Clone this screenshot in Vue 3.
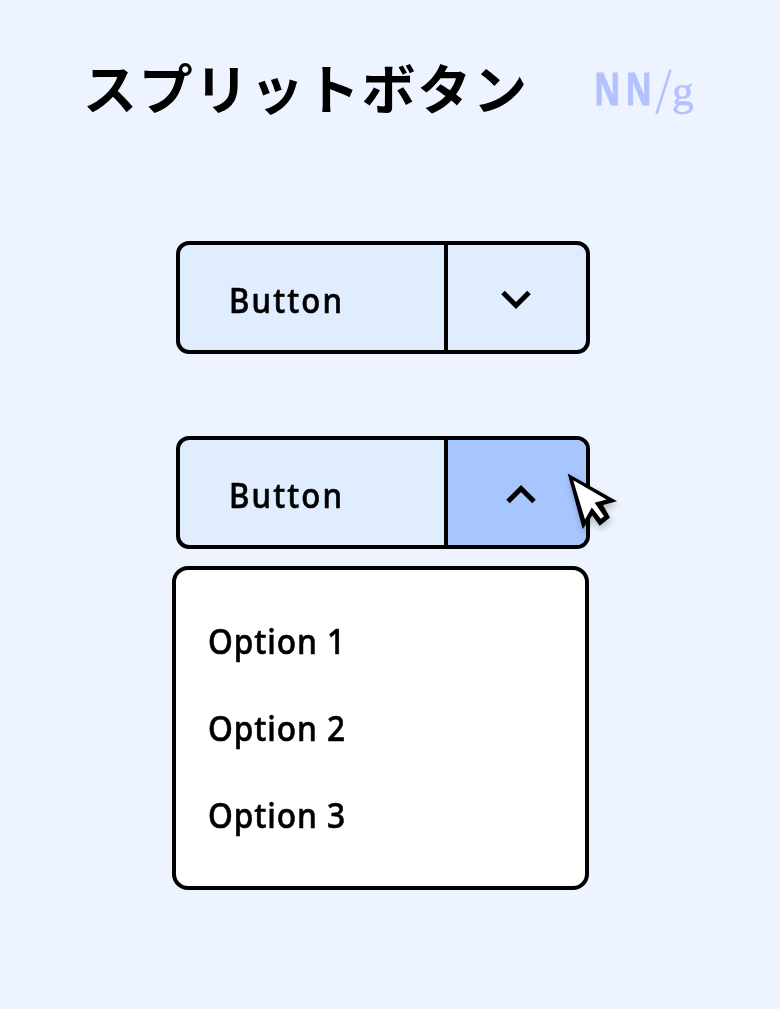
<script setup>
const options = ['Option 1', 'Option 2', 'Option 3']
</script>

<template>
  <main class="page">
    <header class="header">
      <h1 class="title">スプリットボタン</h1>
      <div class="brand"><span class="brand-nn">NN</span><svg class="slash" width="18" height="48" viewBox="0 0 18 48"><path d="M15.5 1.5 1.5 46" /></svg><span class="brand-g">g</span></div>
    </header>

    <div class="split">
      <button class="main-action"><span class="label">Button</span></button>
      <button class="toggle">
        <svg class="chevron" width="32" height="22" viewBox="0 0 32 22"><path d="M3 3.5 16 16.5 29 3.5" /></svg>
      </button>
    </div>

    <div class="split second">
      <button class="main-action"><span class="label">Button</span></button>
      <button class="toggle active">
        <svg class="chevron up" width="32" height="22" viewBox="0 0 32 22"><path d="M3 17.5 16 4.5 29 17.5" /></svg>
      </button>
      <svg class="cursor" width="64" height="70" viewBox="0 0 64 70">
        <path d="M7.7 6.5 57 34.2 43 38 50 50.5 39.7 58.8 32.3 48.5 22.7 62Z" />
        <path class="cursor-fill" d="M13.2 13.2 46.5 32.5 34.6 35.7 44 49.2 40.8 51.8 31.8 40.6 25 52.5Z" />
      </svg>
    </div>

    <ul class="menu">
      <li v-for="option in options" :key="option"><span class="option">{{ option }}</span></li>
    </ul>
  </main>
</template>

<style>
html, body { background: #edf4ff; }
</style>

<style scoped>
.page {
  box-sizing: border-box;
  height: 1009px;
  overflow: hidden;
  background: #edf4ff;
  color: #000;
  font-family: "Noto Sans", "Noto Sans CJK JP", sans-serif;
}
.header {
  display: flex;
  height: 241px;
}
.title {
  width: 511px;
  margin: 47px 0 0 83px;
  font: 700 54px/80px "Noto Sans CJK JP", sans-serif;
  letter-spacing: 1.7px;
  white-space: nowrap;
}
.brand {
  display: flex;
  align-items: flex-start;
  margin-top: 68px;
  color: #b3c1ff;
}
.brand-nn {
  width: 61px;
  margin-top: -5px;
  font: 700 45px/50px "Noto Sans", sans-serif;
  letter-spacing: 7px;
  transform: scaleX(0.72);
  transform-origin: 0 0;
  -webkit-text-stroke: 1px currentColor;
}
.slash {
  fill: none;
  stroke: currentColor;
  stroke-width: 2.5;
}
.brand-g {
  margin: -5px 0 0 -1px;
  font: 400 43px/56px "Liberation Serif", serif;
  -webkit-text-stroke: 0.5px currentColor;
}
.split {
  position: relative;
  display: flex;
  box-sizing: border-box;
  width: 414px;
  height: 113px;
  margin-left: 176px;
  border: 4px solid #000;
  border-radius: 13px;
  background: #e0edff;
}
.second { margin-top: 82px; }
button {
  padding: 0;
  border: 0;
  background: none;
  color: inherit;
  font: inherit;
}
.main-action {
  width: 264px;
  padding: 4px 0 0 49px;
  text-align: left;
}
.label, .option {
  display: inline-block;
  font: 500 35px/48px "Noto Sans", sans-serif;
  transform-origin: 0 50%;
  white-space: nowrap;
  -webkit-text-stroke: 0.6px #000;
}
.label {
  letter-spacing: 2.4px;
  transform: scaleX(0.89);
}
.toggle {
  display: flex;
  flex: 1;
  align-items: center;
  justify-content: center;
  border-left: 4px solid #000;
  border-radius: 0 9px 9px 0;
}
.active { background: #a7c6ff; }
.chevron {
  margin: 4px 3px 0 0;
  fill: none;
  stroke: #000;
  stroke-width: 5;
}
.up { margin: 5px 0 0 7px; }
.cursor {
  position: absolute;
  top: 27px;
  left: 380px;
  overflow: visible;
  fill: #000;
  filter: drop-shadow(1px 4px 3px rgba(0, 0, 0, 0.22));
}
.cursor-fill { fill: #fff; }
.menu {
  box-sizing: border-box;
  width: 417px;
  height: 324px;
  margin: 17px 0 0 172px;
  padding: 27px 0 0 32px;
  border: 4px solid #000;
  border-radius: 16px;
  background: #fff;
  list-style: none;
}
.menu li {
  display: flex;
  align-items: center;
  height: 87px;
}
.option {
  letter-spacing: 1px;
  transform: scaleX(0.905);
}
</style>
